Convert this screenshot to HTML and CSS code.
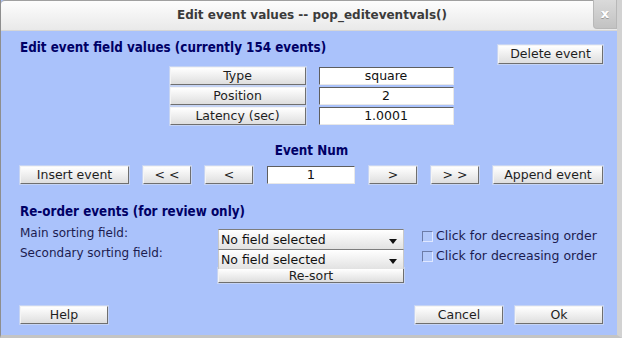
FILE: index.html
```html
<!DOCTYPE html>
<html lang="en">

<head>
    <meta charset="UTF-8">
    <meta name="viewport" content="width=device-width, initial-scale=1.0">
    <title>Edit event values -- pop_editeventvals()</title>
    <link rel="stylesheet" href="styles.css">
</head>

<body>
    <div class="window">
        <!-- title bar -->
        <div class="titlebar">
            <span></span>
            <div class="titlebar-text">Edit event values -- pop_editeventvals()</div>
            <a href="javascript:;" class="close-box">x</a>
        </div>

        <div class="content">
            <!-- field values -->
            <div class="head-row">
                <div class="section-title">Edit event field values (currently 154 events)</div>
                <a href="javascript:;" class="btn btn-delete">Delete event</a>
            </div>
            <div class="fields">
                <a href="javascript:;" class="btn">Type</a>
                <div class="edit">square</div>
                <a href="javascript:;" class="btn">Position</a>
                <div class="edit">2</div>
                <a href="javascript:;" class="btn">Latency (sec)</a>
                <div class="edit">1.0001</div>
            </div>

            <!-- event navigation -->
            <div class="section-title center">Event Num</div>
            <div class="nav-row">
                <a href="javascript:;" class="btn w-insert">Insert event</a>
                <a href="javascript:;" class="btn w-arrow">&lt; &lt;</a>
                <a href="javascript:;" class="btn w-arrow">&lt;</a>
                <div class="edit w-num">1</div>
                <a href="javascript:;" class="btn w-arrow">&gt;</a>
                <a href="javascript:;" class="btn w-arrow">&gt; &gt;</a>
                <a href="javascript:;" class="btn w-append">Append event</a>
            </div>

            <!-- re-order -->
            <div class="section-title reorder">Re-order events (for review only)</div>
            <div class="sort">
                <div class="label">Main sorting field:</div>
                <div class="popup">No field selected<span class="arrow"></span></div>
                <label class="check"><span class="box"></span>Click for decreasing order</label>
                <div class="label">Secondary sorting field:</div>
                <div class="popup">No field selected<span class="arrow"></span></div>
                <label class="check"><span class="box"></span>Click for decreasing order</label>
                <span></span>
                <a href="javascript:;" class="btn btn-resort">Re-sort</a>
            </div>

            <!-- bottom buttons -->
            <div class="bottom-row">
                <a href="javascript:;" class="btn w-bottom">Help</a>
                <div class="bottom-right">
                    <a href="javascript:;" class="btn w-bottom">Cancel</a>
                    <a href="javascript:;" class="btn w-bottom">Ok</a>
                </div>
            </div>
        </div>
    </div>
</body>

</html>
```

FILE: styles.css
```css
* {
    margin: 0;
    padding: 0;
    box-sizing: border-box;
}

body {
    font-family: "DejaVu Sans", "Liberation Sans", sans-serif;
    font-size: 12px;
    background: #d0d0d0;
}

a {
    text-decoration: none;
    color: #1e1e1e;
}
/* 窗口 */

.window {
    display: flex;
    flex-direction: column;
    width: 622px;
    height: 338px;
    border-left: 1px solid #8e8e8e;
    border-right: 5px solid #d2d2d2;
    border-bottom: 3px solid #c4c4c4;
    background: #aac2fb;
}
/* 标题栏 */

.titlebar {
    display: grid;
    grid-template-columns: 1fr auto 1fr;
    align-items: start;
    height: 31px;
    border-top: 1px solid #a0a0a0;
    border-radius: 4px 4px 0 0;
    background: linear-gradient(#fdfdfd, #e9e9e9);
    border-bottom: 1px solid #d6d6d6;
}

.titlebar-text {
    padding-top: 7px;
    padding-left: 6px;
    font-weight: bold;
    font-size: 12px;
    color: #3b3b3b;
}

.close-box {
    justify-self: end;
    width: 24px;
    height: 29px;
    margin-top: -1px;
    border: 1px solid #b8b8b8;
    border-top: none;
    border-radius: 0 0 0 4px;
    background: linear-gradient(#dadada, #c2c2c2);
    color: #fff;
    font-weight: bold;
    font-size: 13px;
    line-height: 27px;
    text-align: center;
    text-shadow: 0 1px 0 #9a9a9a;
}
/* 内容 */

.content {
    flex: 1;
    display: flex;
    flex-direction: column;
    padding: 0 14px 11px 19px;
    color: #10105a;
}

.section-title {
    font-family: "DejaVu Sans Condensed", "DejaVu Sans", sans-serif;
    font-weight: bold;
    font-size: 13.3px;
    line-height: 14px;
    color: #000066;
}

.section-title.center {
    margin-top: 19px;
    text-align: center;
}

.section-title.reorder {
    margin-top: 21px;
}

.head-row {
    display: flex;
    justify-content: space-between;
    align-items: flex-start;
}

.head-row .section-title {
    margin-top: 10px;
}
/* 按钮 */

.btn {
    display: block;
    height: 18px;
    font-size: 12.5px;
    line-height: 16px;
    text-align: center;
    white-space: nowrap;
    border: 1px solid;
    border-color: #f4f4f4 #6f6f6f #6f6f6f #f4f4f4;
    background: linear-gradient(#ffffff, #dedede);
    box-shadow: 0 0 0 1px #c6d4f4;
}

.btn-delete {
    width: 105px;
    height: 19px;
    margin-top: 14px;
}

.edit {
    height: 18px;
    font-size: 12.5px;
    line-height: 16px;
    text-align: center;
    color: #111;
    background: #fff;
    border: 1px solid;
    border-color: #5e5e5e #e8e8e8 #e8e8e8 #5e5e5e;
}
/* 字段 */

.fields {
    display: grid;
    grid-template-columns: 136px 135px;
    column-gap: 13px;
    row-gap: 2px;
    justify-content: center;
    margin-top: 3px;
}
/* 事件导航 */

.nav-row {
    display: flex;
    justify-content: space-between;
    margin-top: 8px;
}

.w-insert {
    width: 109px;
}

.w-arrow {
    width: 48px;
}

.w-num {
    width: 88px;
    font-size: 13px;
}

.w-append {
    width: 110px;
}
/* 排序 */

.sort {
    display: grid;
    grid-template-columns: 198px 186px 1fr;
    grid-template-rows: 20px 19px 15px;
    margin-top: 10px;
}

.label {
    align-self: start;
    margin-top: -3px;
    font-size: 12px;
    color: #1c1c50;
}

.popup {
    position: relative;
    height: 20px;
    padding-left: 2px;
    line-height: 20px;
    font-size: 12.5px;
    color: #111;
    border-top: 1px solid #7d7d7d;
    border-left: 1px solid #c8c8c8;
    border-right: 1px solid #c8c8c8;
    background: linear-gradient(#ffffff, #e2e2e2);
}
/* 下拉箭头 */

.arrow {
    position: absolute;
    right: 6px;
    top: 9px;
    border-left: 4px solid transparent;
    border-right: 4px solid transparent;
    border-top: 5px solid #111;
}

.check {
    display: flex;
    align-items: center;
    align-self: start;
    padding-left: 18px;
    font-size: 12.5px;
    line-height: 14px;
    color: #1c1c50;
}

.check .box {
    width: 11px;
    height: 11px;
    margin-right: 3px;
    border: 1px solid;
    border-color: #6c7ca8 #e0e8ff #e0e8ff #6c7ca8;
    background: #b2c8fa;
}

.btn-resort {
    height: 15px;
    line-height: 13px;
}
/* 底部按钮 */

.bottom-row {
    display: flex;
    justify-content: space-between;
    margin-top: auto;
}

.bottom-right {
    display: flex;
    gap: 12px;
}

.w-bottom {
    width: 88px;
}
```
